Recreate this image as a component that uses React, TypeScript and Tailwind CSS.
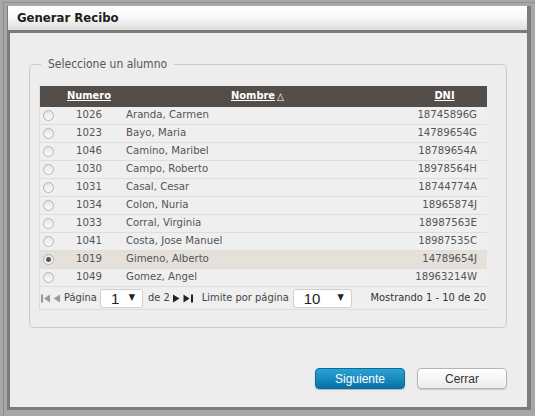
import React from 'react';

type Alumno = { id: string; nombre: string; dni: string };

const alumnos: Alumno[] = [
  { id: '1026', nombre: 'Aranda, Carmen', dni: '18745896G' },
  { id: '1023', nombre: 'Bayo, Maria', dni: '14789654G' },
  { id: '1046', nombre: 'Camino, Maribel', dni: '18789654A' },
  { id: '1030', nombre: 'Campo, Roberto', dni: '18978564H' },
  { id: '1031', nombre: 'Casal, Cesar', dni: '18744774A' },
  { id: '1034', nombre: 'Colon, Nuria', dni: '18965874J' },
  { id: '1033', nombre: 'Corral, Virginia', dni: '18987563E' },
  { id: '1041', nombre: 'Costa, Jose Manuel', dni: '18987535C' },
  { id: '1019', nombre: 'Gimeno, Alberto', dni: '14789654J' },
  { id: '1049', nombre: 'Gomez, Angel', dni: '18963214W' },
];

const tahoma = "font-['DejaVu_Sans_Condensed','DejaVu_Sans',sans-serif]";

function Radio({ checked }: { checked?: boolean }) {
  return (
    <span className="w-[11px] h-[11px] rounded-full border border-[#b4b4b4] bg-gradient-to-b from-[#e6e6e6] to-[#fafafa] grid place-items-center">
      {checked && <span className="w-[5px] h-[5px] rounded-full bg-[#555]" />}
    </span>
  );
}

function Select({ value, width }: { value: string; width: string }) {
  return (
    <div className={`${width} h-[19px] bg-white border border-[#cfcfcf] rounded-[3px] flex items-center justify-between pl-[10px] pr-[7px]`}>
      <span className="text-[15px] leading-none text-[#222] font-['Liberation_Sans',sans-serif]">{value}</span>
      <span className="text-[9px] text-[#222]">▼</span>
    </div>
  );
}

// pager arrows: dir -1 = back, 1 = forward; edge adds the bar
function PagerArrow({ dir, edge, color }: { dir: 1 | -1; edge?: boolean; color: string }) {
  const w = edge ? 10 : 7;
  return (
    <svg width={w} height="9" viewBox={`0 0 ${w} 9`} fill={color}>
      {dir === -1 ? (
        edge ? (
          <>
            <rect x="0" y="0.5" width="2" height="8" />
            <path d="M9 0.5 L3 4.5 L9 8.5 Z" />
          </>
        ) : (
          <path d="M7 0.5 L0.5 4.5 L7 8.5 Z" />
        )
      ) : edge ? (
        <>
          <path d="M0.5 0.5 L6.5 4.5 L0.5 8.5 Z" />
          <rect x="8" y="0.5" width="2" height="8" />
        </>
      ) : (
        <path d="M0 0.5 L6.5 4.5 L0 8.5 Z" />
      )}
    </svg>
  );
}

export default function App() {
  const selected = '1019';
  return (
    <div className="w-[535px] h-[416px] bg-[#a7a7a7] overflow-hidden pt-[2px] pl-[3px]">
      <div className="h-[414px] border-l border-t border-[#8e8e8e] pl-[3px] pt-[3px]">
        {/* dialog */}
        <div className="w-[524px] h-[404px] bg-[#7b7b7b] flex flex-col pr-[4px] pb-[3px]">
          <div className="h-[24px] ml-[1px] bg-gradient-to-b from-[#ffffff] via-[#f7f7f7] to-[#dcdcdc] flex items-center pl-[9px]">
            <span className={`text-[13px] font-bold text-[#1e1e1e] ${tahoma}`}>Generar Recibo</span>
          </div>
          <div className="h-[3px]" />
          <div className={`flex-1 ml-[3px] bg-[#ededed] flex flex-col ${tahoma}`}>
            <fieldset className="ml-[19px] mr-[20px] mt-[22px] h-[273px] border border-[#cacaca] rounded-[5px] pl-[9px] pt-[13px]">
              <legend className="ml-[2px] px-[7px] text-[12px] text-[#555]">Seleccione un alumno</legend>
              <div className="w-[448px] border-l border-[#dcdcdc]">
                <div className="h-[21px] bg-[#544e4b] grid grid-cols-[24px_50px_287px_87px] items-center text-[11px] font-bold text-white">
                  <span />
                  <span className="text-center underline">Numero</span>
                  <span className="flex justify-center items-center gap-[2px]">
                    <span className="underline">Nombre</span>
                    <span className="text-[10px] leading-none">△</span>
                  </span>
                  <span className="text-center underline">DNI</span>
                </div>
                {alumnos.map((a) => (
                  <div
                    key={a.id}
                    className={`h-[18px] grid grid-cols-[24px_50px_287px_87px] items-center text-[11.3px] text-[#555] border-b border-[#dedede] ${a.id === selected ? 'bg-[#e5e0d9]' : 'bg-[#efefef]'}`}
                  >
                    <span className="flex justify-start pl-[3px]"><Radio checked={a.id === selected} /></span>
                    <span className="text-center">{a.id}</span>
                    <span className="pl-[12px]">{a.nombre}</span>
                    <span className="text-right pr-[11px]">{a.dni}</span>
                  </div>
                ))}
                <div className="h-[23px] bg-[#efefef] border-b border-[#dcdcdc] flex items-center text-[11px] text-[#444]">
                  <span className="ml-[1px] flex"><PagerArrow dir={-1} edge color="#9a9a9a" /></span>
                  <span className="ml-[2px] flex"><PagerArrow dir={-1} color="#9a9a9a" /></span>
                  <span className="ml-[4px]">Página</span>
                  <span className="ml-[3px]"><Select value="1" width="w-[43px]" /></span>
                  <span className="ml-[5px]">de 2</span>
                  <span className="ml-[3px] flex"><PagerArrow dir={1} color="#222" /></span>
                  <span className="ml-[3px] flex"><PagerArrow dir={1} edge color="#222" /></span>
                  <span className="ml-[9px]">Limite por página</span>
                  <span className="ml-[4px]"><Select value="10" width="w-[59px]" /></span>
                  <span className="ml-auto pr-[1px] text-[#333]">Mostrando 1 - 10 de 20</span>
                </div>
              </div>
            </fieldset>
            <div className="mt-auto mb-[18px] mr-[20px] flex justify-end gap-[12px] font-['Liberation_Sans',sans-serif] text-[12px]">
              <button className="w-[90px] h-[21px] rounded-[4px] border border-[#0a6b98] bg-gradient-to-b from-[#2aa2d6] to-[#0474a8] text-white shadow-[0_1px_1px_rgba(0,0,0,0.25)]">
                Siguiente
              </button>
              <button className="w-[90px] h-[21px] rounded-[4px] border border-[#b5b5b5] bg-gradient-to-b from-[#ffffff] to-[#ececec] text-[#333] shadow-[0_1px_1px_rgba(0,0,0,0.15)]">
                Cerrar
              </button>
            </div>
          </div>
        </div>
      </div>
    </div>
  );
}
